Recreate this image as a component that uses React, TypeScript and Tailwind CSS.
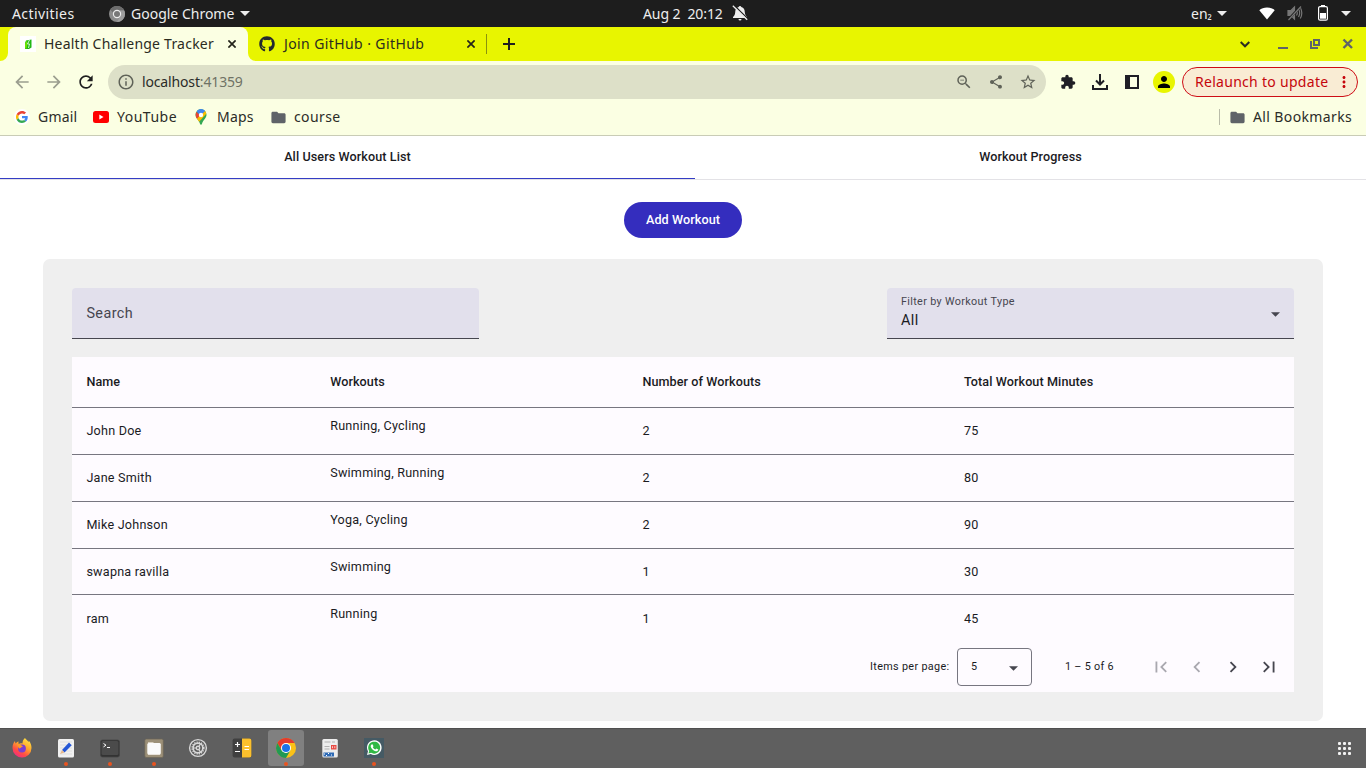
import React from "react";
import { FaGithub } from "react-icons/fa";
import {
  MdArrowBack,
  MdArrowForward,
  MdRefresh,
  MdInfoOutline,
  MdZoomOut,
  MdShare,
  MdStarBorder,
  MdExtension,
  MdPerson,
  MdMoreVert,
  MdFolder,
  MdFirstPage,
  MdLastPage,
  MdChevronLeft,
  MdChevronRight,
} from "react-icons/md";

const ui = "font-['Noto_Sans',sans-serif] whitespace-nowrap";

const rows = [
  { name: "John Doe", workouts: "Running, Cycling", count: 2, minutes: 75, h: "h-[47px] border-b" },
  { name: "Jane Smith", workouts: "Swimming, Running", count: 2, minutes: 80, h: "h-[47px] border-b" },
  { name: "Mike Johnson", workouts: "Yoga, Cycling", count: 2, minutes: 90, h: "h-[47px] border-b" },
  { name: "swapna ravilla", workouts: "Swimming", count: 1, minutes: 30, h: "h-[46px] border-b pt-[2px]" },
  { name: "ram", workouts: "Running", count: 1, minutes: 45, h: "h-[47px] pt-[2px]" },
];

function Caret({ className }: { className: string }) {
  return (
    <svg width="10" height="5" viewBox="0 0 10 5" className={`shrink-0 ${className}`} fill="currentColor">
      <path d="M0 0h10L5 5z" />
    </svg>
  );
}

function SmallCaret({ className }: { className: string }) {
  return (
    <svg width="9" height="5" viewBox="0 0 9 5" className={`shrink-0 ${className}`} fill="currentColor">
      <path d="M0 .3h9L4.500 4.800z" />
    </svg>
  );
}

function TabClose() {
  return (
    <svg width="8" height="8" viewBox="0 0 8 8" className="shrink-0" stroke="#24251a" strokeWidth="1.700">
      <path d="M.4.400l7.200 7.200M7.600.400L.4 7.600" />
    </svg>
  );
}

function TopBar() {
  return (
    <div className={`${ui} flex h-[27px] items-center bg-[#1d1d1d] text-[14px] text-[#ededed]`}>
      <span className="ml-3 w-[97px] tracking-[0.420px]">Activities</span>
      <svg width="16" height="16" viewBox="0 0 16 16" className="shrink-0">
        <circle cx="8" cy="8" r="8" fill="#8b8b8b" />
        <path d="M8 0a8 8 0 0 1 7.200 4.500H8A4 4 0 0 0 4.400 7L1.300 3.700A8 8 0 0 1 8 0z" fill="#6d6d6d" />
        <path d="M15.200 4.500A8 8 0 0 1 8 16l3.300-5.800A4 4 0 0 0 10 4.500z" fill="#9d9d9d" />
        <circle cx="8" cy="8" r="4.200" fill="#ececec" />
        <circle cx="8" cy="8" r="3" fill="#777" />
      </svg>
      <span className="ml-[6px] w-[104px]">Google Chrome</span>
      <Caret className="ml-[5px]" />
      <span className="ml-[393px] w-[89px] whitespace-pre pb-px tracking-[-0.1px]">Aug 2  20:12</span>
      <svg width="16" height="16" viewBox="0 0 16 16" className="mb-px shrink-0" fill="#ededed">
        <path d="M8 1a1.300 1.300 0 0 0-1.300 1.100C4 2.700 3.300 5 3.200 7.300 3.100 10 2 11 1 12v1h14v-1c-1-1-2-2-2.200-4.700C12.700 5 12 2.700 9.300 2.100A1.300 1.300 0 0 0 8 1zM6.500 14h3A1.500 1.500 0 0 1 8 15.500 1.500 1.500 0 0 1 6.500 14z" />
        <path d="M2 .200l13.400 13.300" stroke="#1d1d1d" strokeWidth="1.400" />
        <path d="M.8.700l14.400 14" stroke="#ededed" strokeWidth="1.300" />
      </svg>
      <span className="ml-[443px] w-[26px]">
        en<span className="inline-block -translate-y-px text-[12px]">₂</span>
      </span>
      <Caret className="" />
      <svg width="16" height="13" viewBox="0 0 16 13" className="ml-[32px] shrink-0" fill="#fff">
        <path d="M8 12.500L.3 3.200C2.200 1.300 5 .4 8 .4s5.800.9 7.700 2.800z" />
      </svg>
      <svg width="16" height="16" viewBox="0 0 16 16" className="mb-px ml-3 shrink-0" fill="none" stroke="#777" strokeWidth="1.200">
        <path d="M1 5.500h3L7.500 2v12L4 10.500H1z" fill="#777" />
        <path d="M9.500 5.500q1.600 2.500 0 5M11.500 4q2.400 4 0 8M13.300 2.500q3 5.500 0 11" />
        <path d="M1 15L14 1" stroke="#1d1d1d" strokeWidth="2.500" />
        <path d="M1.500 15L14 1.500" />
      </svg>
      <svg width="10" height="16" viewBox="0 0 10 16" className="mb-[2px] ml-[15px] shrink-0">
        <path d="M3 0h4v1.500H3z" fill="#fff" />
        <rect x=".6" y="1.600" width="8.800" height="13.600" rx="1.500" fill="none" stroke="#fff" strokeWidth="1.200" />
        <path d="M2 8h6v5.700H2z" fill="#fff" />
      </svg>
      <Caret className="ml-[13px]" />
    </div>
  );
}

function TabStrip() {
  return (
    <div className={`${ui} flex h-[34px] items-center bg-[#e8f500] text-[14px] text-[#2b2c1f]`}>
      <svg width="8" height="8" viewBox="0 0 8 8" className="shrink-0 self-end">
        <path d="M8 0v8H0a8 8 0 0 0 8-8z" fill="#fbffe3" />
      </svg>
      <div className="flex h-full w-[240px] items-center rounded-t-[8px] bg-[#fbffe3]">
        <svg width="16" height="16" viewBox="0 0 16 16" className="ml-3 shrink-0">
          <path fill="#fff" d="M0 0h16v16H0z" />
          <path d="M6 4.500L11.500 3.500v8L9 13H5V7z" fill="#21b816" />
          <path d="M5 8L6.500 4.500l1 3-1 5H5z" fill="#6ae400" />
          <path d="M9.500 4L7.500 8h2l-1 4" fill="none" stroke="#fff" strokeWidth=".8" />
        </svg>
        <span className="ml-2 w-[184px] pb-px tracking-[0.220px]">Health Challenge Tracker</span>
        <TabClose />
      </div>
      <svg width="8" height="8" viewBox="0 0 8 8" className="shrink-0 self-end">
        <path d="M0 0v8h8a8 8 0 0 1-8-8z" fill="#fbffe3" />
      </svg>
      <FaGithub className="ml-[3px] size-4 shrink-0 text-[#24292f]" />
      <span className="ml-[9px] w-[183px] pb-px tracking-[0.400px]">Join GitHub · GitHub</span>
      <TabClose />
      <div className="ml-[11px] h-5 w-px bg-[#8a920d]" />
      <svg width="12" height="12" viewBox="0 0 12 12" className="ml-4 shrink-0" stroke="#1f1f1f" strokeWidth="2">
        <path d="M6 0v12M0 6h12" />
      </svg>
      <svg width="10" height="7" viewBox="0 0 10 7" className="ml-[725px] shrink-0" fill="none" stroke="#2b2c1f" strokeWidth="2">
        <path d="M.7 1L5 5.300 9.300 1" />
      </svg>
      <svg width="76" height="12" viewBox="0 0 76 12" className="ml-[28px] shrink-0" fill="none" stroke="#5f6368" strokeWidth="2">
        <path d="M0 10h10" />
        <path d="M36 2h5v5h-5z" />
        <path d="M33 3v7h7" />
        <path d="M65.500 1.500l8.500 8.500M74 1.500L65.500 10" strokeWidth="2.400" />
      </svg>
    </div>
  );
}

function Toolbar() {
  return (
    <div className={`${ui} flex h-[41px] items-center bg-[#fbffe3] text-[14px]`}>
      <MdArrowBack className="ml-3 size-5 shrink-0 text-[#9b9e8f]" />
      <MdArrowForward className="ml-3 size-5 shrink-0 text-[#9b9e8f]" />
      <MdRefresh className="ml-3 size-5 shrink-0 text-[#1f1f1f]" />
      <div className="ml-3 mt-[1px] flex h-[34px] w-[938px] items-center rounded-full bg-[#dde0c8] text-[#5f6258]">
        <MdInfoOutline className="ml-[9px] size-[18px]" />
        <span className="ml-[7px] w-[813px] pb-px tracking-[-0.15px] text-[#6f7265]">
          <span className="text-[#2b2c28]">localhost</span>:41359
        </span>
        <MdZoomOut className="size-[18px]" />
        <MdShare className="ml-[15px] size-4" />
        <MdStarBorder className="ml-[15px] size-[18px]" />
      </div>
      <MdExtension className="ml-[14px] size-4 text-[#1f1f25]" />
      <svg width="16" height="16" viewBox="0 0 16 16" className="ml-4 shrink-0" fill="none" stroke="#1f1f25" strokeWidth="2">
        <path d="M8 0v10M4 6.500l4 4 4-4M1 11v4h14v-4" />
      </svg>
      <svg width="14" height="14" viewBox="0 0 14 14" className="ml-[17px] shrink-0" fill="#1f1f25">
        <path fillRule="evenodd" d="M0 0h14v14H0zM5 2v10h7V2z" />
      </svg>
      <div className="ml-[14px] flex size-[22px] items-center justify-center rounded-full bg-[#e8f500]">
        <MdPerson className="size-[18px] text-black" />
      </div>
      <div className="ml-[7px] mt-[1px] flex h-[30px] w-[176px] items-center rounded-full border border-[#ce0d16] bg-[#f9ecd4] text-[#c5050c]">
        <span className="ml-3 w-[140px] pb-px tracking-[0.290px]">Relaunch to update</span>
        <MdMoreVert className="size-[18px] shrink-0" />
      </div>
    </div>
  );
}

function Bookmarks() {
  return (
    <div className={`${ui} flex h-[34px] items-center border-b border-[#c9ccb6] bg-[#fbffe3] pb-[3px] text-[14px] text-[#2b2c28]`}>
      <div className="ml-[14px] flex size-4 items-center justify-center rounded-full bg-white">
        <svg width="12" height="12" viewBox="0 0 48 48">
          <path fill="#EA4335" d="M24 9.500c3.540 0 6.710 1.220 9.210 3.600l6.850-6.850C35.900 2.380 30.470 0 24 0 14.620 0 6.510 5.380 2.560 13.220l7.980 6.190C12.430 13.720 17.740 9.500 24 9.500z" />
          <path fill="#4285F4" d="M46.980 24.550c0-1.570-.15-3.090-.38-4.550H24v9.020h12.940c-.58 2.960-2.260 5.480-4.780 7.180l7.730 6c4.510-4.180 7.090-10.360 7.090-17.650z" />
          <path fill="#FBBC05" d="M10.530 28.590a14.500 14.500 0 0 1 0-9.180l-7.980-6.190a24 24 0 0 0 0 21.560z" />
          <path fill="#34A853" d="M24 48c6.480 0 11.930-2.130 15.890-5.810l-7.730-6c-2.150 1.450-4.920 2.300-8.160 2.300-6.260 0-11.570-4.220-13.470-9.910l-7.980 6.190C6.510 42.620 14.620 48 24 48z" />
        </svg>
      </div>
      <span className="ml-2 w-[55px] pb-px tracking-[0.200px]">Gmail</span>
      <svg width="16" height="12" viewBox="0 0 16 12" className="shrink-0">
        <rect width="16" height="12" rx="2.500" fill="#f00" />
        <path d="M6.300 3.500v5l4.200-2.500z" fill="#fff" />
      </svg>
      <span className="ml-2 w-[78px] pb-px tracking-[0.500px]">YouTube</span>
      <svg width="12" height="16" viewBox="0 0 12 16" className="shrink-0">
        <defs>
          <clipPath id="pin">
            <path d="M6 0a5.500 5.800 0 0 1 5.500 5.800c0 3.500-3.200 4.700-4.500 9Q6 17 5 14.800C3.700 10.500.5 9.300.5 5.800A5.500 5.800 0 0 1 6 0z" />
          </clipPath>
        </defs>
        <g clipPath="url(#pin)">
          <path d="M0 0h12v16H0z" fill="#34a853" />
          <path d="M0 11L12 0v4L3 14z" fill="#fbbc04" />
          <path d="M0 0h12L5 7z" fill="#4285f4" />
          <path d="M0 2l5 4-4 5z" fill="#ea4335" />
        </g>
        <circle cx="6" cy="6" r="2.200" fill="#fff" />
      </svg>
      <span className="ml-[10px] w-[53px] pb-px tracking-[0.200px]">Maps</span>
      <MdFolder className="size-[17px] shrink-0 text-[#5f6368]" />
      <span className="ml-[7px] w-[925px] pb-px tracking-[0.400px]">course</span>
      <div className="h-4 w-px bg-[#b9bca9]" />
      <MdFolder className="ml-[9px] size-[17px] shrink-0 text-[#5f6368]" />
      <span className="ml-[7px] pb-px tracking-[0.380px]">All Bookmarks</span>
    </div>
  );
}

function Field({ children }: { children: React.ReactNode }) {
  return (
    <div className="flex h-[51px] w-[407px] items-center rounded-t-[4px] border-b border-[#46464f] bg-[#e2e0ec] px-[14px]">
      {children}
    </div>
  );
}

function WorkoutTable() {
  const grid = "grid grid-cols-[244px_312px_321.500px_1fr]";
  return (
    <div className="mt-[18px] h-[335px] bg-[#fefbff] text-[12.6px] tracking-[0.225px] text-[#1b1b1f]">
      <div className={`${grid} h-[51px] items-center border-b border-[#777680] font-medium tracking-[0.09px]`}>
        <span className="pl-[14.4px]">Name</span>
        <span className="pl-[14.2px]">Workouts</span>
        <span className="pl-[14.4px]">Number of Workouts</span>
        <span className="pl-[14.4px]">Total Workout Minutes</span>
      </div>
      {rows.map((r) => (
        <div key={r.name} className={`${grid} ${r.h} items-center border-[#777680]`}>
          <span className="pl-[14.4px]">{r.name}</span>
          <span className="pb-[10px] pl-[14.2px]">{r.workouts}</span>
          <span className="pl-[14.4px]">{r.count}</span>
          <span className="pl-[14.4px]">{r.minutes}</span>
        </div>
      ))}
      <div className="flex h-[50px] items-center justify-end pr-[7px] text-[10.8px] tracking-[0.34px]">
        <span>Items per page:</span>
        <div className="ml-[7.500px] flex h-[38px] w-[75px] items-center justify-between rounded-[4px] border border-[#777680] pl-[13px] pr-[13px]">
          <span>5</span>
          <SmallCaret className="mt-[3px] text-[#46464f]" />
        </div>
        <span className="ml-[33px] w-[78px] tracking-[0.300px]">1 – 5 of 6</span>
        <div className="flex text-[#a9a8af]">
          <div className="flex w-9 justify-center"><MdFirstPage className="size-[22px]" /></div>
          <div className="flex w-9 justify-center"><MdChevronLeft className="size-[22px]" /></div>
          <div className="flex w-9 justify-center text-[#46464f]"><MdChevronRight className="size-[22px]" /></div>
          <div className="flex w-9 justify-center text-[#46464f]"><MdLastPage className="size-[22px]" /></div>
        </div>
      </div>
    </div>
  );
}

function Page() {
  return (
    <div className="flex h-[592px] flex-col bg-white font-[Roboto,sans-serif] text-[#1b1b1f]">
      <div className="flex h-[44px] flex-col">
        <div className="flex h-[43px] text-[12.6px] font-medium tracking-[0.09px]">
          <div className="flex w-[695px] items-center justify-center border-b border-[#343dc4]">All Users Workout List</div>
          <div className="flex flex-1 items-center justify-center border-b border-transparent">Workout Progress</div>
        </div>
        <div className="h-px bg-[#e3e2e6]" />
      </div>
      <button className="mt-[22px] h-9 w-[118px] self-center rounded-full bg-[#342dbe] text-[12.6px] font-medium tracking-[0.09px] text-white">
        Add Workout
      </button>
      <div className="mx-[43px] mt-[21px] h-[462px] rounded-[7px] bg-[#efefef] px-[29px] pt-[29px]">
        <div className="flex justify-between">
          <Field>
            <span className="pl-[0.4px] pt-px text-[14.4px] tracking-[0.42px] text-[#46464f]">Search</span>
          </Field>
          <Field>
            <div className="flex flex-1 flex-col pb-[2px]">
              <span className="text-[10.8px] leading-[16px] tracking-[0.34px] text-[#46464f]">Filter by Workout Type</span>
              <span className="text-[14.4px] leading-[21px] tracking-[0.42px]">All</span>
            </div>
            <SmallCaret className="mt-[2px] text-[#46464f]" />
          </Field>
        </div>
        <WorkoutTable />
      </div>
    </div>
  );
}

const dock: { id: string; running: boolean; active?: boolean; art: React.ReactNode }[] = [
  {
    id: "firefox",
    running: false,
    art: (
      <>
        <defs>
          <linearGradient id="flame" x1=".8" y1="0" x2=".2" y2="1">
            <stop offset="0" stopColor="#ffe845" />
            <stop offset=".4" stopColor="#ffa52c" />
            <stop offset=".7" stopColor="#ff4f43" />
            <stop offset="1" stopColor="#f0248c" />
          </linearGradient>
        </defs>
        <path d="M13 0c.8 1.300 2.300 2.300 3.500 4 .3-.5.300-1 .2-1.500C18.800 4.800 19.500 7.500 19.500 10A9.500 9.500 0 0 1 .5 10C.5 7 1.500 4.500 3 3c0 1 .2 1.800.7 2.500.8-1.200 2-1.800 3-2-.4.8-.4 1.800 0 2.500C8 5 9 5 10.500 5.500 10.500 3 11.500 1 13 0z" fill="url(#flame)" />
        <circle cx="10" cy="10.500" r="3.900" fill="#7a3fd0" />
        <path d="M5 6.500c2.500-.3 4.500.5 6 2.200-1.800.1-2 1.600-4 1.700z" fill="#ff9a25" />
      </>
    ),
  },
  {
    id: "editor",
    running: true,
    art: (
      <>
        <rect x="2" y="1" width="16" height="18.500" rx="1.500" fill="#f1f1f1" />
        <path d="M4 4h12M4 7h12M4 10h12M4 13h12M4 16h12" stroke="#d7d7d7" strokeWidth=".7" />
        <path d="M6 12L13 4.500l2.700 2.700L8.500 14.500z" fill="#2457d6" />
        <path d="M6 12l2.500 2.500-4.500 1.500z" fill="#e7b98c" />
      </>
    ),
  },
  {
    id: "terminal",
    running: true,
    art: (
      <>
        <rect x=".5" y="2" width="19" height="17" rx="2" fill="#333" stroke="#454545" strokeWidth=".8" />
        <rect x="1.500" y="3" width="17" height="14" rx="1.500" fill="#4b4b4b" />
        <path d="M3.500 5.500L6 7.200 3.500 8.900M7 9.500h3" fill="none" stroke="#fff" strokeWidth="1" />
      </>
    ),
  },
  {
    id: "files",
    running: true,
    art: (
      <>
        <rect x=".8" y="1" width="18.500" height="18.500" rx="1.500" fill="#9c9078" stroke="#6d6658" strokeWidth=".7" />
        <path d="M4 5V4h5l1 1h6v12H4z" fill="#d6cdbd" />
        <rect x="3.300" y="5" width="13.500" height="11.500" rx="1.500" fill="#fafafa" />
      </>
    ),
  },
  {
    id: "settings",
    running: false,
    art: (
      <g fill="none" stroke="#d8d8d8">
        <circle cx="10" cy="10" r="8.400" strokeWidth="1.400" />
        <circle cx="10" cy="10" r="5.800" strokeWidth="1.500" strokeDasharray="1.300 .980" />
        <circle cx="10" cy="10" r="4.800" strokeWidth="1.500" />
        <circle cx="10" cy="10" r="1.700" strokeWidth="1.400" />
        <path d="M11 8.300l1.600-2.700M8 10H5M11 11.700l1.600 2.700" strokeWidth="1.200" />
      </g>
    ),
  },
  {
    id: "calculator",
    running: false,
    art: (
      <>
        <rect x=".6" y=".6" width="18.800" height="18.800" rx="2" fill="#404040" />
        <path d="M10 .6h7.400a2 2 0 0 1 2 2v14.800a2 2 0 0 1-2 2H10z" fill="#fbc02d" />
        <path d="M3 6.500h5M5.500 4v5M3 13.500h5M12.500 8.500h4.500M12.500 11.500h4.500" stroke="#fff" strokeWidth="1.200" />
      </>
    ),
  },
  {
    id: "chrome",
    running: true,
    active: true,
    art: (
      <>
        <circle cx="10" cy="10" r="10" fill="#fbc116" />
        <path d="M1.340 5A10 10 0 0 1 18.660 5H10l-4.500 7.500z" fill="#e33b2e" />
        <path d="M1.340 5A10 10 0 0 0 10 20l4.330-7.500L10 15l-4.330-2.500z" fill="#229954" />
        <circle cx="10" cy="10" r="5" fill="#fff" />
        <circle cx="10" cy="10" r="4" fill="#1a73e8" />
      </>
    ),
  },
  {
    id: "document",
    running: false,
    art: (
      <>
        <rect x="2.300" y="1" width="15.500" height="18.500" rx="1.500" fill="#ededed" />
        <path d="M4.500 4h6M4.500 8.500h5M4.500 11h5M12 4h3" stroke="#aaa" strokeWidth=".9" />
        <path d="M11 7h5.500v4.500H11z" fill="#e84a43" />
        <path d="M12.500 8.200v2M14.800 8.200v2" stroke="#fff" strokeWidth=".7" />
        <path d="M3.500 14.500h10.500v4H3.500z" fill="#2e6ab5" />
        <path d="M4 16h1M6 17.500h1M8 15.500h1M11 17h1" stroke="#fff" strokeWidth="1" />
      </>
    ),
  },
  {
    id: "chat",
    running: true,
    art: (
      <>
        <path d="M0 0h20v20H0z" fill="#455a64" />
        <path d="M3 17l1-3.700A7.300 7.300 0 1 1 6.800 16z" fill="#fff" />
        <path d="M4.400 15.600l.8-2.600a6 6 0 1 1 1.900 1.800z" fill="#2fb944" />
        <path d="M7.500 6.500l1-.2 1 2-.7 1q1 1.700 2.600 2.200l.9-1 2 1c-.2 1.500-1.300 1.900-2.500 1.700-2.500-.5-5-3-5.100-5 0-.7.3-1.300.8-1.700z" fill="#fff" />
      </>
    ),
  },
];

function Dock() {
  return (
    <div className="flex h-10 items-center gap-2 bg-[#5f5f5f] pl-1 shadow-[inset_0_1px_0_#505050]">
      {dock.map((d) => (
        <div
          key={d.id}
          className={`relative flex size-9 shrink-0 items-center justify-center rounded-[3px] ${d.active ? "bg-[#808080]" : ""}`}
        >
          <svg width="20" height="20" viewBox="0 0 20 20">
            {d.art}
          </svg>
          {d.running && <span className="absolute bottom-0 left-4 size-1 rounded-full bg-[#e95420]" />}
        </div>
      ))}
      <svg width="13" height="13" viewBox="0 0 13 13" className="ml-auto mr-[15px]" fill="#f2f2f2">
        {[0, 5, 10].map((y) => [0, 5, 10].map((x) => <rect key={`${x}-${y}`} x={x} y={y} width="3" height="3" rx="1" />))}
      </svg>
    </div>
  );
}

export default function App() {
  return (
    <div className="h-[768px] w-[1366px] overflow-hidden">
      <TopBar />
      <TabStrip />
      <Toolbar />
      <Bookmarks />
      <Page />
      <Dock />
    </div>
  );
}
